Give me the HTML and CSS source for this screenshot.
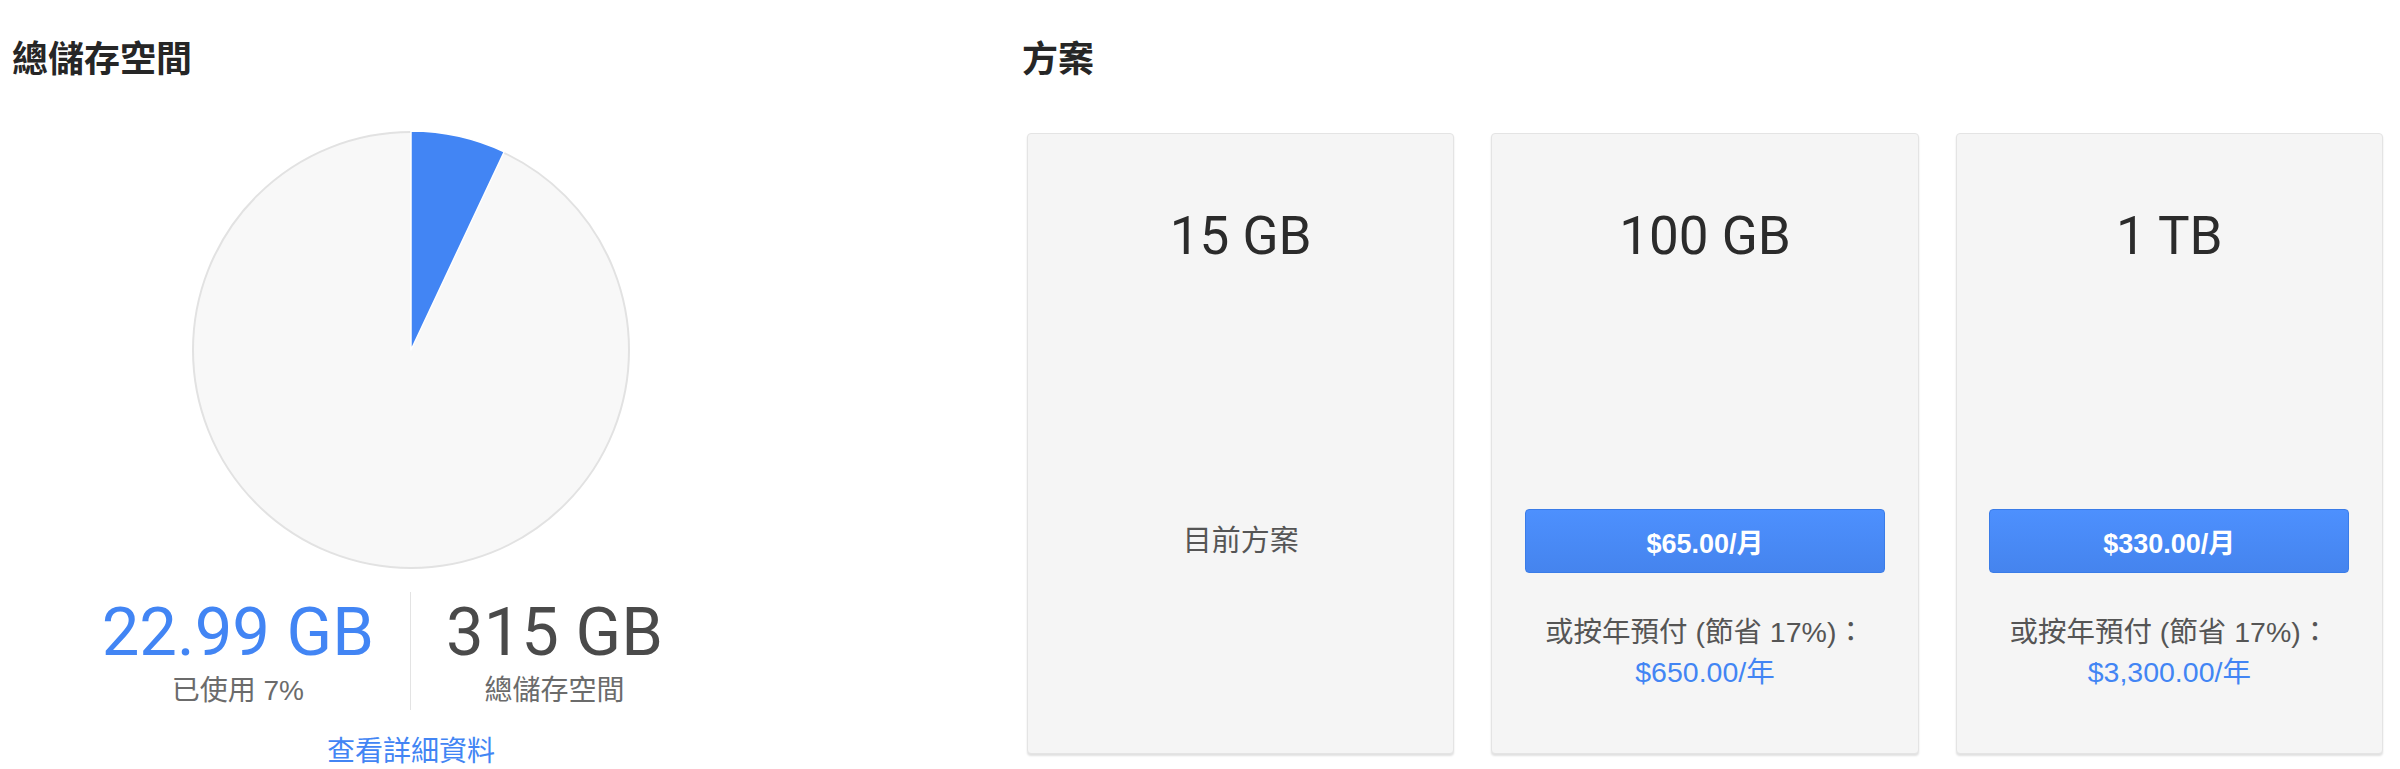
FILE: index.html
```html
<!DOCTYPE html>
<html lang="zh-Hant">
<head>
<meta charset="UTF-8">
<title>儲存空間方案</title>
<link rel="stylesheet" href="styles.css">
</head>
<body>

<div class="page">
  <div class="storage">
    <h2 class="title">總儲存空間</h2>

    <div class="chart">
      <!-- 圓餅圖：已使用 7% -->
      <svg width="440" height="440" viewBox="0 0 440 440">
        <circle cx="220" cy="220" r="218" fill="#f8f8f8" stroke="#e2e2e2" stroke-width="2"/>
        <path d="M220 220 L220 1 A219 219 0 0 1 313.2 21.8 Z" fill="#4285f4" stroke="#fff" stroke-width="1.5" stroke-linejoin="round"/>
      </svg>
    </div>

    <div class="stats">
      <div class="stat used">
        <div class="num">22.99 GB</div>
        <div class="label">已使用 7%</div>
      </div>
      <div class="stat total">
        <div class="num">315 GB</div>
        <div class="label">總儲存空間</div>
      </div>
    </div>

    <a class="details" href="#">查看詳細資料</a>
  </div>

  <div class="plans">
    <h2 class="title">方案</h2>

    <div class="cards">
      <div class="plan">
        <div class="size">15 GB</div>
        <div class="current">目前方案</div>
      </div>
      <div class="plan">
        <div class="size">100 GB</div>
        <button class="buy">$65.00/月</button>
        <div class="annual">或按年預付 (節省 17%)：<br><a href="#">$650.00/年</a></div>
      </div>
      <div class="plan">
        <div class="size">1 TB</div>
        <button class="buy">$330.00/月</button>
        <div class="annual">或按年預付 (節省 17%)：<br><a href="#">$3,300.00/年</a></div>
      </div>
    </div>
  </div>
</div>

</body>
</html>
```

FILE: styles.css
```css
body { margin: 0; background: #fff; font-family: "Liberation Sans", "Noto Sans CJK TC", sans-serif; color: #333; }
.page { display: flex; padding: 38px 17px 0 12px; }

.title { margin: 0; font-size: 36px; line-height: 36px; font-weight: bold; color: #262626; font-family: "Noto Sans CJK TC", sans-serif; }

.storage { width: 798px; display: flex; flex-direction: column; }
.storage .title { align-self: flex-start; }
.chart { display: flex; justify-content: center; margin-top: 56px; }
.chart svg { display: block; }

.stats { display: grid; grid-template-columns: 1fr 1fr; margin-top: 22px; }
.stat { text-align: center; padding: 7px 0 1px; }
.stat.used { justify-self: end; padding-right: 36px; border-right: 1px solid #e3e3e3; }
.stat.total { justify-self: start; padding-left: 35px; }
.num { font-family: Roboto, sans-serif; font-size: 67px; line-height: 67px; color: #4a4a4a; }
.used .num { color: #4285f4; }
.label { margin-top: 7px; font-size: 28px; line-height: 36px; color: #6b6b6b; }

.details { align-self: center; margin-top: 24px; font-size: 28px; line-height: 36px; color: #4285f4; text-decoration: none; }

.plans { flex: 1; margin-left: 212px; }
.cards { display: flex; gap: 37px; margin: 59px 0 0 5px; }
.plan { flex: 1; box-sizing: border-box; height: 621px; padding-top: 76px; background: #f5f5f5; border: 1px solid #e4e4e4; border-radius: 4px; box-shadow: 0 2px 2px rgba(0,0,0,0.12); display: flex; flex-direction: column; align-items: center; }
.size { font-family: Roboto, sans-serif; font-size: 53px; line-height: 53px; color: #2b2b2b; }

.buy, .current { margin-top: 246px; width: 360px; height: 64px; }
.current { text-align: center; line-height: 64px; font-size: 29px; color: #555; }
.buy { border: 1px solid #3a7ce8; border-radius: 4px; background: linear-gradient(#4d90fe, #4584ee); color: #fff; font-family: "Liberation Sans", "Noto Sans CJK TC", sans-serif; font-size: 27px; font-weight: bold; cursor: pointer; }

.annual { margin-top: 39px; text-align: center; font-size: 28.5px; line-height: 40px; color: #555; }
.annual a { color: #4285f4; text-decoration: none; }
```
